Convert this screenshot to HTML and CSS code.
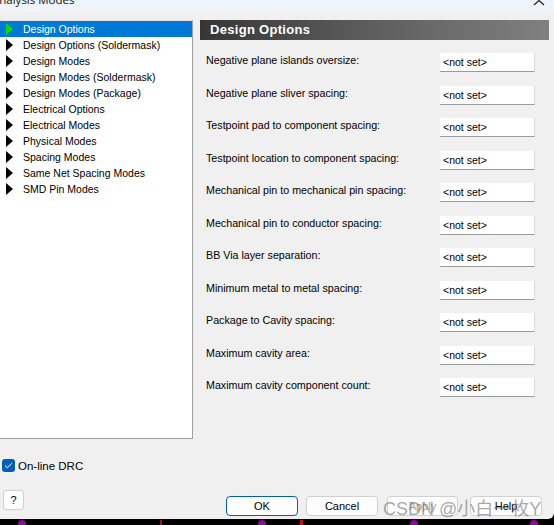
FILE: index.html
```html
<!DOCTYPE html>
<html>
<head>
<meta charset="utf-8">
<link rel="stylesheet" href="styles.css">
</head>
<body>
<div class="dialog">
  <div class="titlebar">
    <span class="title-text">Analysis Modes</span>
    <svg class="chev" width="12" height="8" viewBox="0 0 12 8"><path d="M1 6 L6 1.5 L11 6" fill="none" stroke="#222" stroke-width="1.2"/></svg>
  </div>
  <div class="main">
    <div class="list">
      <div class="item sel"><span class="tri green"></span>Design Options</div>
      <div class="item"><span class="tri"></span>Design Options (Soldermask)</div>
      <div class="item"><span class="tri"></span>Design Modes</div>
      <div class="item"><span class="tri"></span>Design Modes (Soldermask)</div>
      <div class="item"><span class="tri"></span>Design Modes (Package)</div>
      <div class="item"><span class="tri"></span>Electrical Options</div>
      <div class="item"><span class="tri"></span>Electrical Modes</div>
      <div class="item"><span class="tri"></span>Physical Modes</div>
      <div class="item"><span class="tri"></span>Spacing Modes</div>
      <div class="item"><span class="tri"></span>Same Net Spacing Modes</div>
      <div class="item"><span class="tri"></span>SMD Pin Modes</div>
    </div>
    <div class="panel">
      <div class="header">Design Options</div>
      <div class="rows">
        <div class="row"><span class="label">Negative plane islands oversize:</span><span class="field">&lt;not set&gt;</span></div>
        <div class="row"><span class="label">Negative plane sliver spacing:</span><span class="field">&lt;not set&gt;</span></div>
        <div class="row"><span class="label">Testpoint pad to component spacing:</span><span class="field">&lt;not set&gt;</span></div>
        <div class="row"><span class="label">Testpoint location to component spacing:</span><span class="field">&lt;not set&gt;</span></div>
        <div class="row"><span class="label">Mechanical pin to mechanical pin spacing:</span><span class="field">&lt;not set&gt;</span></div>
        <div class="row"><span class="label">Mechanical pin to conductor spacing:</span><span class="field">&lt;not set&gt;</span></div>
        <div class="row"><span class="label">BB Via layer separation:</span><span class="field">&lt;not set&gt;</span></div>
        <div class="row"><span class="label">Minimum metal to metal spacing:</span><span class="field">&lt;not set&gt;</span></div>
        <div class="row"><span class="label">Package to Cavity spacing:</span><span class="field">&lt;not set&gt;</span></div>
        <div class="row"><span class="label">Maximum cavity area:</span><span class="field">&lt;not set&gt;</span></div>
        <div class="row"><span class="label">Maximum cavity component count:</span><span class="field">&lt;not set&gt;</span></div>
      </div>
    </div>
  </div>
  <div class="drc">
    <span class="check"><svg width="9" height="7" viewBox="0 0 9 7"><path d="M1 3.5 L3.4 5.8 L8 1.2" fill="none" stroke="#fff" stroke-width="1"/></svg></span>
    <span class="drc-label">On-line DRC</span>
  </div>
  <div class="footer">
    <span class="btn q">?</span>
    <div class="btns">
      <span class="btn ok">OK</span>
      <span class="btn cancel">Cancel</span>
      <span class="btn apply">Apply</span>
      <span class="btn help">Help</span>
    </div>
    <span class="watermark">CSDN @小白一枚Y</span>
  </div>
</div>
<div class="pcb">
  <span class="dot d1"></span><span class="dot d2"></span><span class="dot d3"></span><span class="dot d4"></span><span class="dot d5"></span><span class="dot d6"></span>
</div>
</body>
</html>
```
FILE: styles.css
```css
html, body {
  margin: 0;
  padding: 0;
}
body {
  width: 554px;
  height: 525px;
  overflow: hidden;
  background: #000;
  font-family: "Liberation Sans", Arial, sans-serif;
  color: #000;
}
.dialog {
  position: relative;
  height: 519px;
  background: #f0f0f0;
  border-bottom-right-radius: 6px;
  overflow: hidden;
}
.titlebar {
  position: relative;
  height: 12px;
  background: #eef4f9;
  overflow: hidden;
}
.title-text {
  display: block;
  font-family: "Open Sans", "Liberation Sans", sans-serif;
  font-size: 11.5px;
  line-height: 14px;
  margin-top: -7px;
  margin-left: -8px;
  color: #111;
}
.chev {
  position: absolute;
  right: 9px;
  top: -1px;
}
.main {
  display: flex;
  padding-top: 8px;
}
.list {
  width: 192px;
  height: 417px;
  background: #fff;
  border-top: 1px solid #e3e3e3;
  border-right: 1px solid #a0a0a0;
  border-bottom: 1px solid #a0a0a0;
  font-size: 10.5px;
}
.item {
  display: flex;
  align-items: center;
  height: 16px;
  white-space: nowrap;
}
.item.sel {
  background: #0078d7;
  color: #fff;
}
.tri {
  width: 0;
  height: 0;
  margin-left: 6px;
  margin-right: 10px;
  border-top: 6px solid transparent;
  border-bottom: 6px solid transparent;
  border-left: 7px solid #000;
}
.tri.green {
  border-left-color: #00e000;
}
.panel {
  margin-left: 7px;
  width: 349px;
}
.header {
  height: 20px;
  background: linear-gradient(to right, #363636, #575757 40%, #808080);
  color: #fff;
  font-weight: bold;
  font-size: 13px;
  line-height: 20px;
  padding-left: 10px;
  letter-spacing: 0.3px;
}
.rows {
  padding-top: 13px;
}
.row {
  display: flex;
  align-items: flex-start;
  justify-content: space-between;
  height: 32.5px;
  padding-left: 6px;
  padding-right: 14px;
}
.label {
  font-size: 10.7px;
  line-height: 14px;
  white-space: nowrap;
}
.field {
  box-sizing: border-box;
  width: 95px;
  height: 19px;
  background: #fff;
  border-bottom: 1.5px solid #9a9a9a;
  border-right: 1px solid #dcdcdc;
  font-size: 10.5px;
  line-height: 19px;
  padding-left: 3px;
}
.drc {
  display: flex;
  align-items: center;
  margin-top: 20px;
  height: 13px;
}
.check {
  display: flex;
  align-items: center;
  justify-content: center;
  box-sizing: border-box;
  width: 13px;
  height: 13px;
  margin-left: 2px;
  background: #005fb8;
  border-radius: 3px;
}
.drc-label {
  font-size: 11.5px;
  margin-left: 3px;
}
.footer {
  position: relative;
  display: flex;
  align-items: flex-start;
  margin-top: 18px;
}
.btn {
  box-sizing: border-box;
  display: flex;
  align-items: center;
  justify-content: center;
  height: 20px;
  background: #fdfdfd;
  border: 1px solid #d0d0d0;
  border-radius: 4px;
  font-size: 11px;
}
.q {
  width: 21px;
  margin-left: 3px;
  border-radius: 3px;
}
.btns {
  display: flex;
  margin-top: 6px;
  margin-left: 202px;
}
.ok {
  width: 72px;
  border-color: #005fb8;
}
.cancel {
  width: 72px;
  margin-left: 8px;
}
.apply {
  width: 71px;
  margin-left: 9px;
  color: #a0a0a0;
}
.help {
  width: 72px;
  margin-left: 12px;
}
.watermark {
  position: absolute;
  left: 383px;
  top: 7px;
  font-family: "Liberation Sans", "Noto Sans CJK SC", sans-serif;
  font-size: 18px;
  line-height: 24px;
  color: rgba(110, 110, 110, 0.6);
  white-space: nowrap;
}
.pcb {
  position: relative;
  height: 6px;
}
.dot {
  position: absolute;
  top: 1px;
  width: 8px;
  height: 8px;
  border-radius: 50%;
  background: #8a0a9a;
}
.d1 { left: 18px; }
.d2 { left: 160px; background: #a01020; width: 2px; border-radius: 0; }
.d3 { left: 258px; }
.d4 { left: 300px; background: #c01020; width: 3px; border-radius: 0; }
.d5 { left: 410px; }
.d6 { left: 530px; }
```
